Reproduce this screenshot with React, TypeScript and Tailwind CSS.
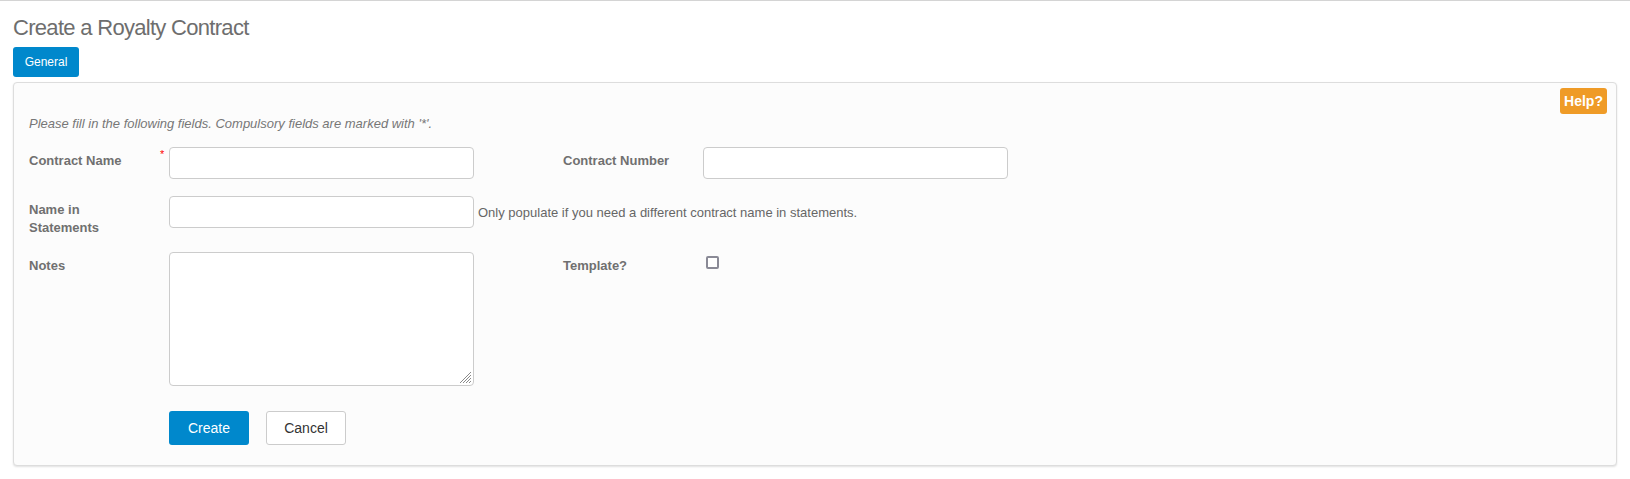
import React from "react";

export default function App() {
  return (
    <div className="min-h-screen w-full bg-white font-['Liberation_Sans',Arial,sans-serif] border-t border-[#d4d4d4]">
      <div className="px-[13px]">
        <h1 className="pt-[14px] text-[22px] leading-[26px] tracking-[-0.7px] text-[#6e6e6e] font-normal">
          Create a Royalty Contract
        </h1>
        <div className="mt-[6px] flex">
          <button className="h-[30px] w-[66px] rounded-[3px] bg-[#0088cc] text-[12px] text-white">
            General
          </button>
        </div>
        <div className="mt-[5px] h-[384px] rounded-[4px] border border-[#dddddd] bg-[#fcfcfc] pl-[15px] pr-[9px] pt-[5px] shadow-[0_1px_2px_rgba(0,0,0,0.12)]">
          <div className="flex justify-end">
            <button className="h-[26px] w-[47px] rounded-[3px] bg-[#ef9b27] text-[14px] font-bold text-white">
              Help?
            </button>
          </div>
          <p className="text-[13px] leading-[20px] italic text-[#777777]">
            Please fill in the following fields. Compulsory fields are marked with '*'.
          </p>

          {/* Row 1 */}
          <div className="mt-[13px] flex items-start">
            <div className="flex w-[140px]">
              <label className="w-[131px] pt-[5px] text-[13px] leading-[18px] font-bold text-[#707070]">
                Contract Name
              </label>
              <span className="pt-[1px] text-[11px] leading-[12px] text-[#ff0000]">*</span>
            </div>
            <input className="h-[32px] w-[305px] rounded-[4px] border border-[#cccccc] bg-white" />
            <div className="w-[89px]" />
            <label className="w-[140px] pt-[5px] text-[13px] leading-[18px] font-bold text-[#707070]">
              Contract Number
            </label>
            <input className="h-[32px] w-[305px] rounded-[4px] border border-[#cccccc] bg-white" />
          </div>

          {/* Row 2 */}
          <div className="mt-[17px] flex items-start">
            <div className="w-[140px]">
              <label className="block w-[115px] pt-[5px] text-[13px] leading-[18px] font-bold text-[#707070]">
                Name in Statements
              </label>
            </div>
            <input className="h-[32px] w-[305px] rounded-[4px] border border-[#cccccc] bg-white" />
            <span className="ml-[4px] pt-[8px] text-[13px] leading-[18px] text-[#666666]">
              Only populate if you need a different contract name in statements.
            </span>
          </div>

          {/* Row 3 */}
          <div className="mt-[15px] flex items-start">
            <label className="w-[140px] pt-[5px] text-[13px] leading-[18px] font-bold text-[#707070]">
              Notes
            </label>
            <div className="relative h-[134px] w-[305px]">
              <textarea className="h-full w-full resize-none rounded-[4px] border border-[#cccccc] bg-white" />
              <svg
                className="pointer-events-none absolute bottom-[3px] right-[3px]"
                width="12"
                height="12"
                viewBox="0 0 12 12"
              >
                <g stroke="#8a8a8a" strokeWidth="1">
                  <line x1="1" y1="12" x2="12" y2="1" />
                  <line x1="4" y1="12" x2="12" y2="4" />
                  <line x1="7" y1="12" x2="12" y2="7" />
                  <line x1="10" y1="12" x2="12" y2="10" />
                </g>
              </svg>
            </div>
            <div className="w-[89px]" />
            <label className="w-[140px] pt-[5px] text-[13px] leading-[18px] font-bold text-[#707070]">
              Template?
            </label>
            <input
              type="checkbox"
              className="ml-[3px] mt-[4px] h-[13px] w-[13px] appearance-none rounded-[2px] border-2 border-[#8a8a96] bg-white"
            />
          </div>

          {/* Buttons */}
          <div className="mt-[25px] flex gap-[17px] pl-[140px]">
            <button className="h-[34px] w-[80px] rounded-[3px] bg-[#0088cc] text-[14px] text-white">
              Create
            </button>
            <button className="h-[34px] w-[80px] rounded-[3px] border border-[#cccccc] bg-white text-[14px] text-[#333333]">
              Cancel
            </button>
          </div>
        </div>
      </div>
    </div>
  );
}
